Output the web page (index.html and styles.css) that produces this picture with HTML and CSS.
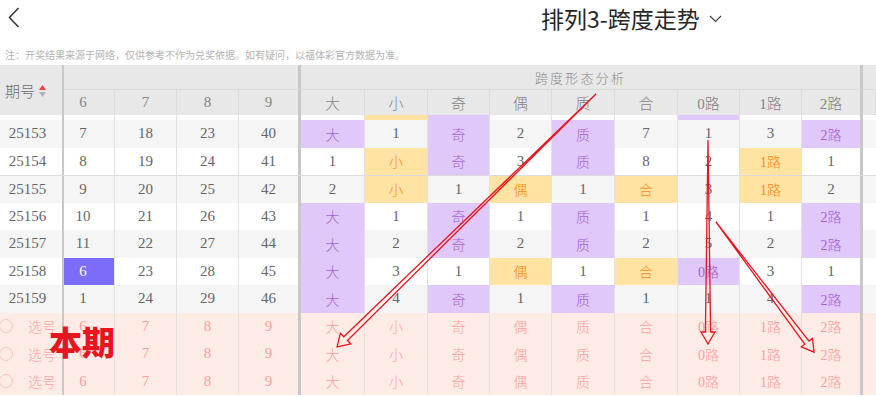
FILE: index.html
```html
<!DOCTYPE html>
<html lang="zh-CN">
<head>
<meta charset="utf-8">
<title>排列3-跨度走势</title>
<link rel="stylesheet" href="styles.css">
</head>
<body>
<div class="page">
  <header class="topbar">
    <svg class="back" viewBox="0 0 12 22"><polyline points="10.5,1 1.5,10.5 10.5,20" fill="none" stroke="#333" stroke-width="1.5"/></svg>
    <h1 class="title">排列3-跨度走势</h1>
    <svg class="caret" viewBox="0 0 13 8"><polyline points="1,1 6.5,6.5 12,1" fill="none" stroke="#444" stroke-width="1.2"/></svg>
  </header>
  <p class="note">注：开奖结果来源于网络，仅供参考不作为兑奖依据。如有疑问，以福体彩官方数据为准。</p>

  <div class="table">
    <div class="thead">
      <div class="h hid">期号<svg class="sort" viewBox="0 0 7 12"><polygon points="0,5 3.5,0 7,5" fill="#f04040"/><polygon points="0,7 7,7 3.5,12" fill="#b0b0b0"/></svg></div>
      <div class="h grp g1 k"></div>
      <div class="h grp g2 k spaced">跨度形态分析</div>
      <div class="h grp g3"></div>
      <div class="h d6">6</div>
      <div class="h">7</div>
      <div class="h">8</div>
      <div class="h k">9</div>
      <div class="h">大</div>
      <div class="h">小</div>
      <div class="h">奇</div>
      <div class="h">偶</div>
      <div class="h">质</div>
      <div class="h">合</div>
      <div class="h">0路</div>
      <div class="h">1路</div>
      <div class="h k">2路</div>
      <div class="h"></div>
    </div>

    <div class="row stub">
      <span class="id"></span><span></span><span></span><span></span><span class="k"></span>
      <span></span><span class="y"></span><span class="p"></span><span></span><span></span><span></span><span class="p"></span><span></span><span class="k"></span><span></span>
    </div>
    <div class="row g">
      <span class="id">25153</span><span class="d6">7</span><span>18</span><span>23</span><span class="k">40</span>
      <span class="p">大</span><span>1</span><span class="p">奇</span><span>2</span><span class="p">质</span><span>7</span><span>1</span><span>3</span><span class="p k">2路</span><span></span>
    </div>
    <div class="row w">
      <span class="id">25154</span><span class="d6">8</span><span>19</span><span>24</span><span class="k">41</span>
      <span>1</span><span class="y">小</span><span class="p">奇</span><span>3</span><span class="p">质</span><span>8</span><span>2</span><span class="y">1路</span><span class="k">1</span><span></span>
    </div>
    <div class="row g sep">
      <span class="id">25155</span><span class="d6">9</span><span>20</span><span>25</span><span class="k">42</span>
      <span>2</span><span class="y">小</span><span>1</span><span class="y">偶</span><span>1</span><span class="y">合</span><span>3</span><span class="y">1路</span><span class="k">2</span><span></span>
    </div>
    <div class="row w">
      <span class="id">25156</span><span class="d6">10</span><span>21</span><span>26</span><span class="k">43</span>
      <span class="p">大</span><span>1</span><span class="p">奇</span><span>1</span><span class="p">质</span><span>1</span><span>4</span><span>1</span><span class="p k">2路</span><span></span>
    </div>
    <div class="row g">
      <span class="id">25157</span><span class="d6">11</span><span>22</span><span>27</span><span class="k">44</span>
      <span class="p">大</span><span>2</span><span class="p">奇</span><span>2</span><span class="p">质</span><span>2</span><span>5</span><span>2</span><span class="p k">2路</span><span></span>
    </div>
    <div class="row w">
      <span class="id">25158</span><span class="d6 b">6</span><span>23</span><span>28</span><span class="k">45</span>
      <span class="p">大</span><span>3</span><span>1</span><span class="y">偶</span><span>1</span><span class="y">合</span><span class="p">0路</span><span>3</span><span class="k">1</span><span></span>
    </div>
    <div class="row g">
      <span class="id">25159</span><span class="d6">1</span><span>24</span><span>29</span><span class="k">46</span>
      <span class="p">大</span><span>4</span><span class="p">奇</span><span>1</span><span class="p">质</span><span>1</span><span>1</span><span>4</span><span class="p k">2路</span><span></span>
    </div>

    <div class="row pick">
      <span class="id sel"><i class="radio"></i>选号</span><span class="d6">6</span><span>7</span><span>8</span><span class="k">9</span>
      <span>大</span><span>小</span><span>奇</span><span>偶</span><span>质</span><span>合</span><span>0路</span><span>1路</span><span class="k">2路</span><span></span>
    </div>
    <div class="row pick">
      <span class="id sel"><i class="radio"></i>选号</span><span class="d6">6</span><span>7</span><span>8</span><span class="k">9</span>
      <span>大</span><span>小</span><span>奇</span><span>偶</span><span>质</span><span>合</span><span>0路</span><span>1路</span><span class="k">2路</span><span></span>
    </div>
    <div class="row pick">
      <span class="id sel"><i class="radio"></i>选号</span><span class="d6">6</span><span>7</span><span>8</span><span class="k">9</span>
      <span>大</span><span>小</span><span>奇</span><span>偶</span><span>质</span><span>合</span><span>0路</span><span>1路</span><span class="k">2路</span><span></span>
    </div>
  </div>

  <div class="mark">本期</div>
  <svg class="arrows" viewBox="0 0 876 397">
    <g fill="none" stroke="#e8141e" stroke-width="1.3" stroke-linejoin="miter">
      <polygon transform="translate(596,94) rotate(135.67)" points="0,0 350,-2.6 350,-7.5 362,0 350,7.5 350,2.6"/>
      <polygon transform="translate(708,140) rotate(90)" points="0,0 192,-2.6 192,-7 204,0 192,7 192,2.6"/>
      <polygon transform="translate(716,222) rotate(53)" points="0,0 151,-2.6 151,-7 163,0 151,7 151,2.6"/>
    </g>
  </svg>
</div>
</body>
</html>
```

FILE: styles.css
```css
* { box-sizing: border-box; margin: 0; padding: 0; }

:root {
  --cols: 64px 51px 62px 62px 62px 64px 63px 62px 62px 63px 63px 62px 62px 61px 1fr;
  --line: #e2e2e2;
  --thick: #c8c8c8;
}

body {
  margin: 0;
  background: #fff;
  font-family: "Noto Sans CJK SC", "Noto Sans", sans-serif;
}

.page {
  position: relative;
  width: 876px;
  height: 397px;
  overflow: hidden;
  background: #fff;
}

.topbar {
  display: flex;
  align-items: center;
  height: 36px;
  padding-left: 8px;
}

.back { width: 12px; height: 22px; }

.title {
  margin-left: 521px;
  font-size: 23px;
  line-height: 36px;
  font-weight: 400;
  color: #262626;
}

.caret { width: 13px; height: 8px; margin-left: 9px; margin-top: 1px; }

.note {
  padding: 12px 0 3px 5px;
  font-size: 10px;
  line-height: 14px;
  color: #b3b3b3;
  white-space: nowrap;
}

/* header */
.thead {
  display: grid;
  grid-template-columns: var(--cols);
  grid-template-rows: 25px 25px;
  background: #e8e8e8;
  color: #858585;
  font-size: 14px;
}

.h {
  display: flex;
  align-items: center;
  justify-content: center;
  border-right: 1px solid #dcdcdc;
  font-family: "Liberation Serif", "Noto Sans CJK SC", serif;
  font-size: 15px;
  font-weight: 300;
}

.hid {
  grid-row: 1 / 3;
  grid-column: 1;
  justify-content: flex-start;
  padding-left: 5px;
  border-right: 2px solid var(--thick);
  font-family: "Noto Sans CJK SC", sans-serif;
  font-size: 15px;
  color: #6e6e6e;
}

.sort { width: 7px; height: 12px; margin-left: 4px; margin-top: 1px; }

.grp { grid-row: 1; border-bottom: 1px solid #dcdcdc; }
.g1 { grid-column: 2 / 6; }
.g2 { grid-column: 6 / 15; }
.g3 { grid-column: 15; border-right: 0; }

.spaced {
  font-family: "Noto Sans CJK SC", sans-serif;
  font-size: 13px;
  letter-spacing: 2.2px;
  color: #8a8a8a;
}

.h.k { border-right: 3px solid var(--thick); }
.d6 { padding-right: 12px; }

/* body rows */
.row {
  display: grid;
  grid-template-columns: var(--cols);
  height: 27.5px;
  font-family: "Liberation Serif", "Noto Sans CJK SC", serif;
  font-size: 15px;
  color: #666;
}

.row > span {
  display: flex;
  align-items: center;
  justify-content: center;
  border-right: 1px solid var(--line);
  white-space: nowrap;
}

.row > span:last-child { border-right: 0; }
.row > .id { border-right: 2px solid var(--thick); padding-right: 7px; }
.row > .k { border-right: 3px solid var(--thick); }

.row.stub { height: 5px; background: #fff; }
.row.g { background: #f5f5f5; }
.row.w { background: #fff; }
.row.sep { border-top: 1px solid #dcdcdc; }

.row > .p { background: #e0c8fa; color: #a562d8; font-size: 14px; font-weight: 300; }
.row > .y { background: #ffe3a3; color: #ff8a14; font-size: 14px; font-weight: 300; }
.row > .b { background: #7c6cf7; color: #fff; }

.row.pick { background: #fdece6; color: #ff9e9e; }
.row.pick > span:nth-child(n+6) { font-size: 14px; font-weight: 300; }
.row.pick > .sel {
  justify-content: flex-start;
  padding: 0;
  font-family: "Noto Sans CJK SC", sans-serif;
  font-size: 14px;
  font-weight: 300;
  color: #ffa3a3;
}

.radio {
  display: block;
  width: 14px;
  height: 14px;
  margin-left: -1px;
  margin-right: 15px;
  border: 1px solid #f9c4bc;
  border-radius: 50%;
}

/* annotations laid over the table */
.mark {
  position: absolute;
  left: 49px;
  top: 325px;
  font-size: 33px;
  line-height: 1;
  font-weight: 900;
  color: #e8141e;
  font-family: "Noto Sans CJK SC", sans-serif;
}

.arrows {
  position: absolute;
  left: 0;
  top: 0;
  width: 876px;
  height: 397px;
  pointer-events: none;
}
```
